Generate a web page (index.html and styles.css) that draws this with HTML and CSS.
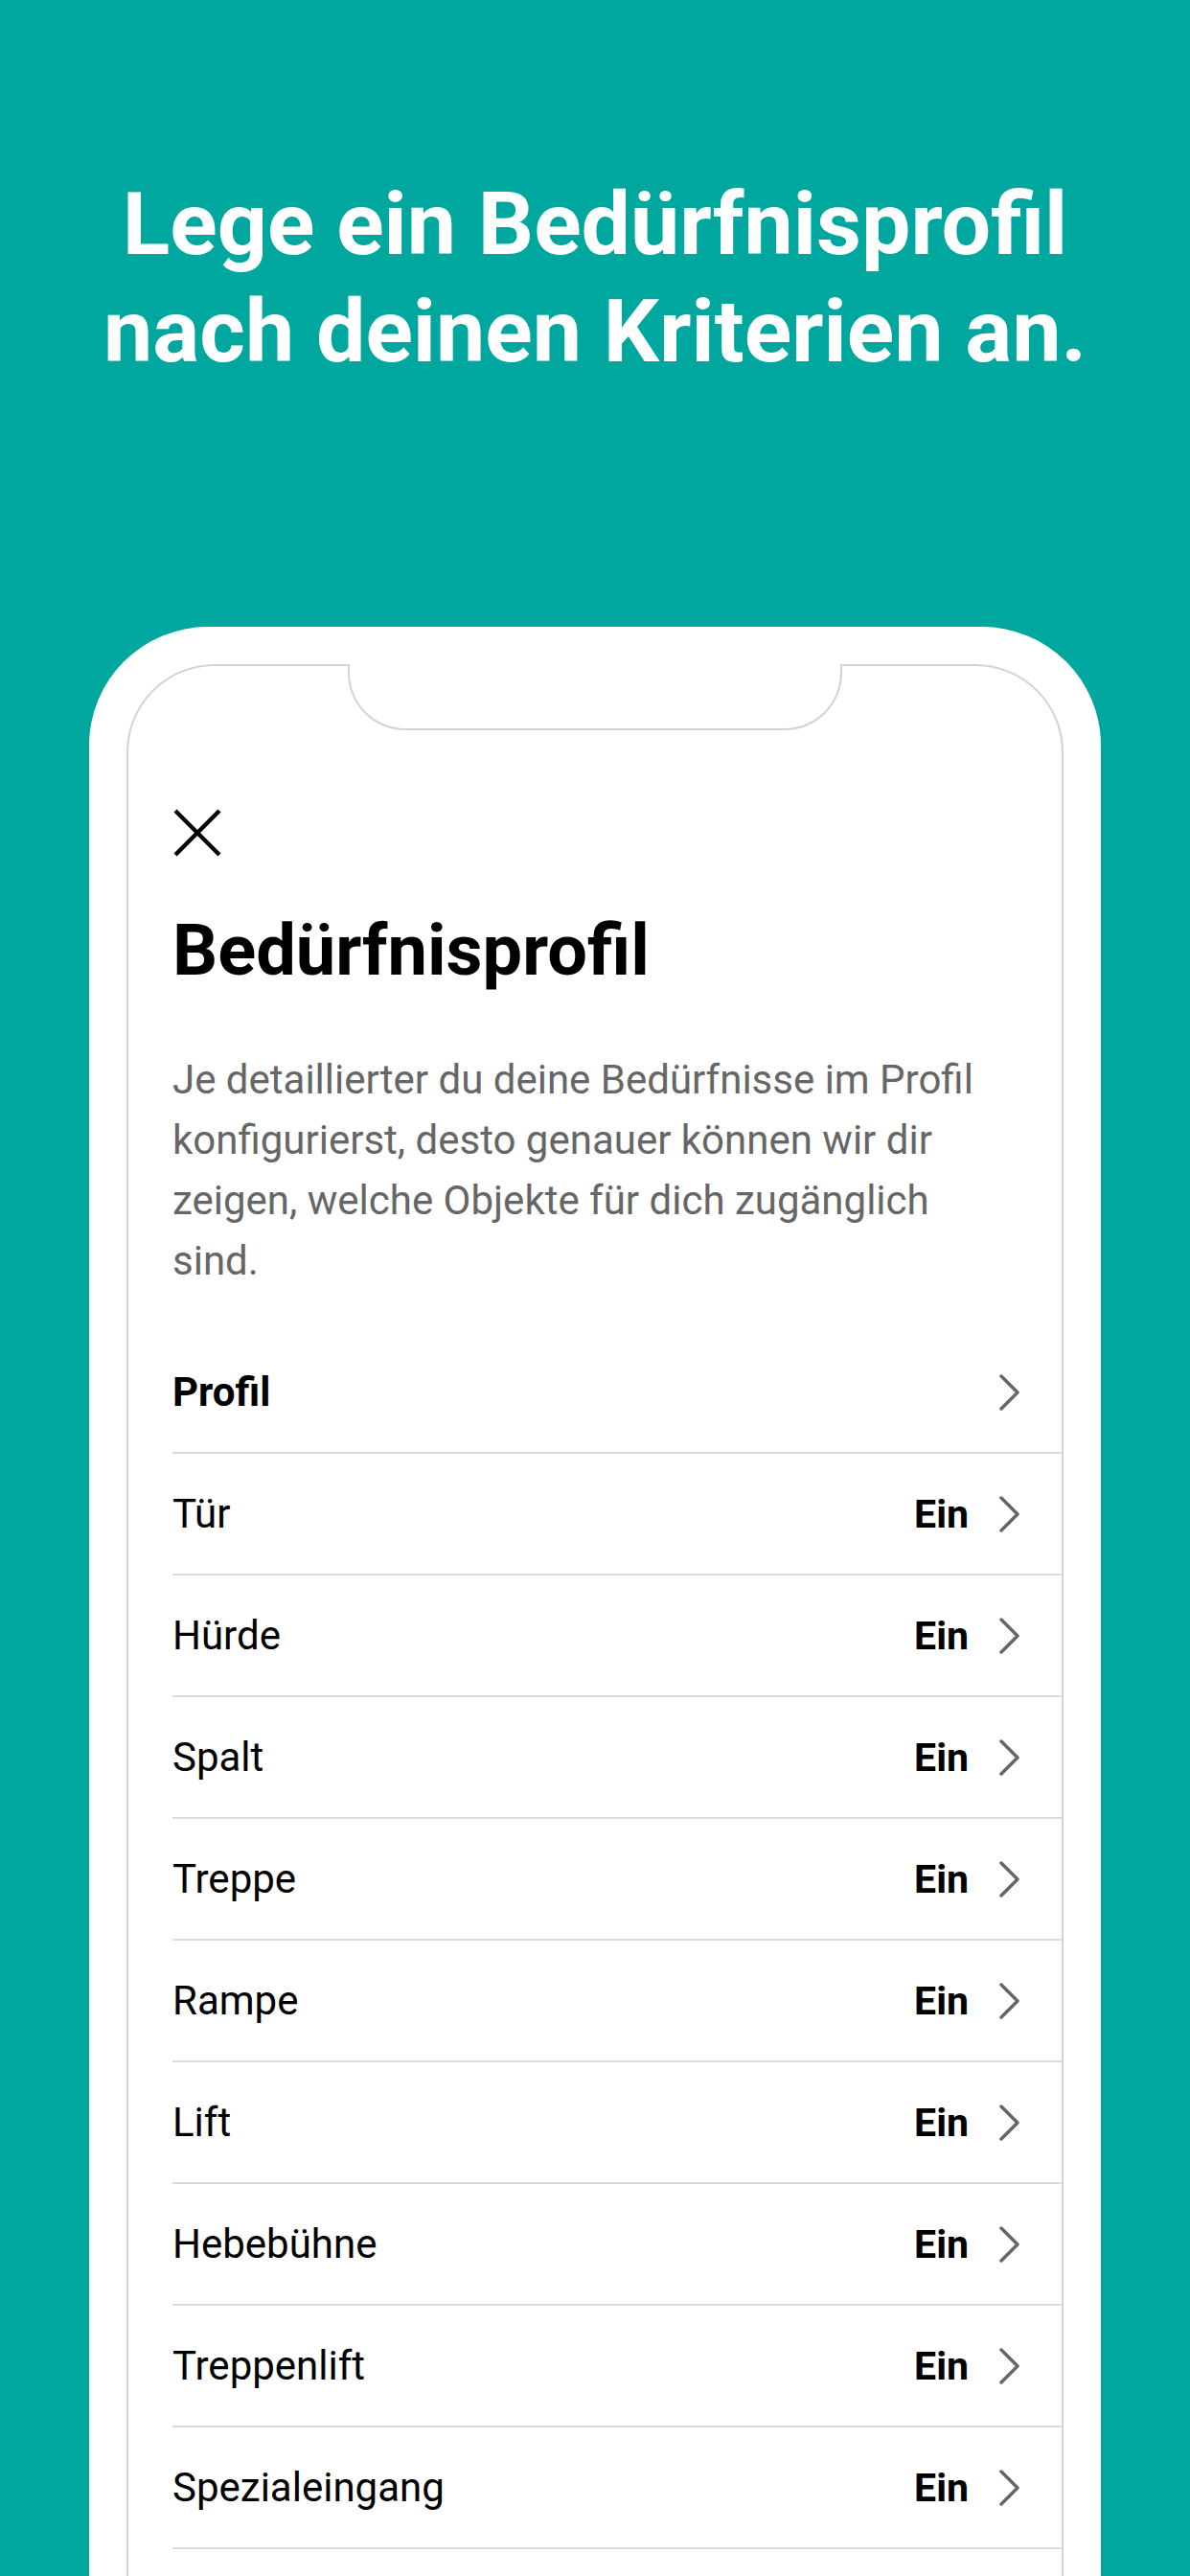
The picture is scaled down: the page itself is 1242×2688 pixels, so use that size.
FILE: index.html
```html
<!DOCTYPE html>
<html lang="de">
<head>
    <meta charset="UTF-8">
    <meta name="viewport" content="width=device-width, initial-scale=1.0">
    <title>Bedürfnisprofil</title>
    <link rel="stylesheet" href="styles.css">
</head>
<body>
<div class="page">

    <h1 class="headline">Lege ein Bedürfnisprofil<br>nach deinen Kriterien an.</h1>

    <!-- Phone mockup -->
    <div class="phone">
        <div class="screen">
            <div class="notch"></div>

            <button class="close" aria-label="Schließen">
                <svg width="50" height="50" viewBox="0 0 50 50">
                    <line x1="2" y1="2" x2="48" y2="48" />
                    <line x1="48" y1="2" x2="2" y2="48" />
                </svg>
            </button>

            <h2 class="title">Bedürfnisprofil</h2>
            <p class="intro">Je detaillierter du deine Bedürfnisse im Profil konfigurierst, desto genauer können wir dir zeigen, welche Objekte für dich zugänglich sind.</p>

            <ul class="settings">
                <li class="row">
                    <span class="label strong">Profil</span>
                    <span class="chev"><svg width="22" height="38" viewBox="0 0 22 38"><polyline points="2,2 19,19 2,36" /></svg></span>
                </li>
                <li class="row">
                    <span class="label">Tür</span>
                    <span class="value">Ein</span>
                    <span class="chev"><svg width="22" height="38" viewBox="0 0 22 38"><polyline points="2,2 19,19 2,36" /></svg></span>
                </li>
                <li class="row">
                    <span class="label">Hürde</span>
                    <span class="value">Ein</span>
                    <span class="chev"><svg width="22" height="38" viewBox="0 0 22 38"><polyline points="2,2 19,19 2,36" /></svg></span>
                </li>
                <li class="row">
                    <span class="label">Spalt</span>
                    <span class="value">Ein</span>
                    <span class="chev"><svg width="22" height="38" viewBox="0 0 22 38"><polyline points="2,2 19,19 2,36" /></svg></span>
                </li>
                <li class="row">
                    <span class="label">Treppe</span>
                    <span class="value">Ein</span>
                    <span class="chev"><svg width="22" height="38" viewBox="0 0 22 38"><polyline points="2,2 19,19 2,36" /></svg></span>
                </li>
                <li class="row">
                    <span class="label">Rampe</span>
                    <span class="value">Ein</span>
                    <span class="chev"><svg width="22" height="38" viewBox="0 0 22 38"><polyline points="2,2 19,19 2,36" /></svg></span>
                </li>
                <li class="row">
                    <span class="label">Lift</span>
                    <span class="value">Ein</span>
                    <span class="chev"><svg width="22" height="38" viewBox="0 0 22 38"><polyline points="2,2 19,19 2,36" /></svg></span>
                </li>
                <li class="row">
                    <span class="label">Hebebühne</span>
                    <span class="value">Ein</span>
                    <span class="chev"><svg width="22" height="38" viewBox="0 0 22 38"><polyline points="2,2 19,19 2,36" /></svg></span>
                </li>
                <li class="row">
                    <span class="label">Treppenlift</span>
                    <span class="value">Ein</span>
                    <span class="chev"><svg width="22" height="38" viewBox="0 0 22 38"><polyline points="2,2 19,19 2,36" /></svg></span>
                </li>
                <li class="row">
                    <span class="label">Spezialeingang</span>
                    <span class="value">Ein</span>
                    <span class="chev"><svg width="22" height="38" viewBox="0 0 22 38"><polyline points="2,2 19,19 2,36" /></svg></span>
                </li>
            </ul>
        </div>
    </div>

</div>
</body>
</html>
```

FILE: styles.css
```css
* {
    box-sizing: border-box;
    font-family: Roboto, 'Noto Sans', sans-serif;
}
body {
    margin: 0;
    background-color: #00a79f;
}
.page {
    height: 2688px;
    overflow: hidden;
}
.headline {
    margin: 0;
    padding-top: 178px;
    text-align: center;
    color: #fff;
    font-size: 91.5px;
    line-height: 112px;
    font-weight: 700;
}

/* phone frame */
.phone {
    width: 1056px;
    margin: 252px auto 0;
    padding: 39px 39px 0;
    background: #fff;
    border-radius: 124px 124px 0 0;
}
.screen {
    position: relative;
    min-height: 2100px;
    padding: 149px 0 0 46px;
    border: 2px solid #d3d3d3;
    border-bottom: none;
    border-radius: 92px 92px 0 0;
}
.notch {
    position: absolute;
    top: -2px;
    left: calc(50% - 258px);
    width: 516px;
    height: 69px;
    background: #fff;
    border: 2px solid #d3d3d3;
    border-top: none;
    border-radius: 0 0 60px 60px;
}

.close {
    display: block;
    padding: 0;
    margin: 0 0 0 1px;
    border: none;
    background: none;
    width: 50px;
    height: 50px;
}
.close svg {
    display: block;
}
.close line {
    stroke: #000;
    stroke-width: 4.5;
}

.title {
    margin: 53px 0 0;
    font-size: 74px;
    line-height: 90px;
    font-weight: 700;
    color: #000;
}
.intro {
    margin: 58px 0 0;
    padding-right: 60px;
    font-size: 42px;
    line-height: 63px;
    color: #666;
}

/* settings list */
.settings {
    list-style: none;
    margin: 43px 0 0;
    padding: 0;
}
.row {
    display: flex;
    align-items: center;
    height: 127px;
    padding-right: 43px;
    border-bottom: 2px solid #dcdcdc;
    font-size: 42px;
    color: #000;
}
.label {
    flex: 1;
}
.strong,
.value {
    font-weight: 700;
}
.value {
    font-size: 41px;
    margin-right: 32px;
}
.chev svg {
    display: block;
}
.chev polyline {
    fill: none;
    stroke: #666;
    stroke-width: 3.5;
    stroke-linecap: round;
    stroke-linejoin: round;
}
```
